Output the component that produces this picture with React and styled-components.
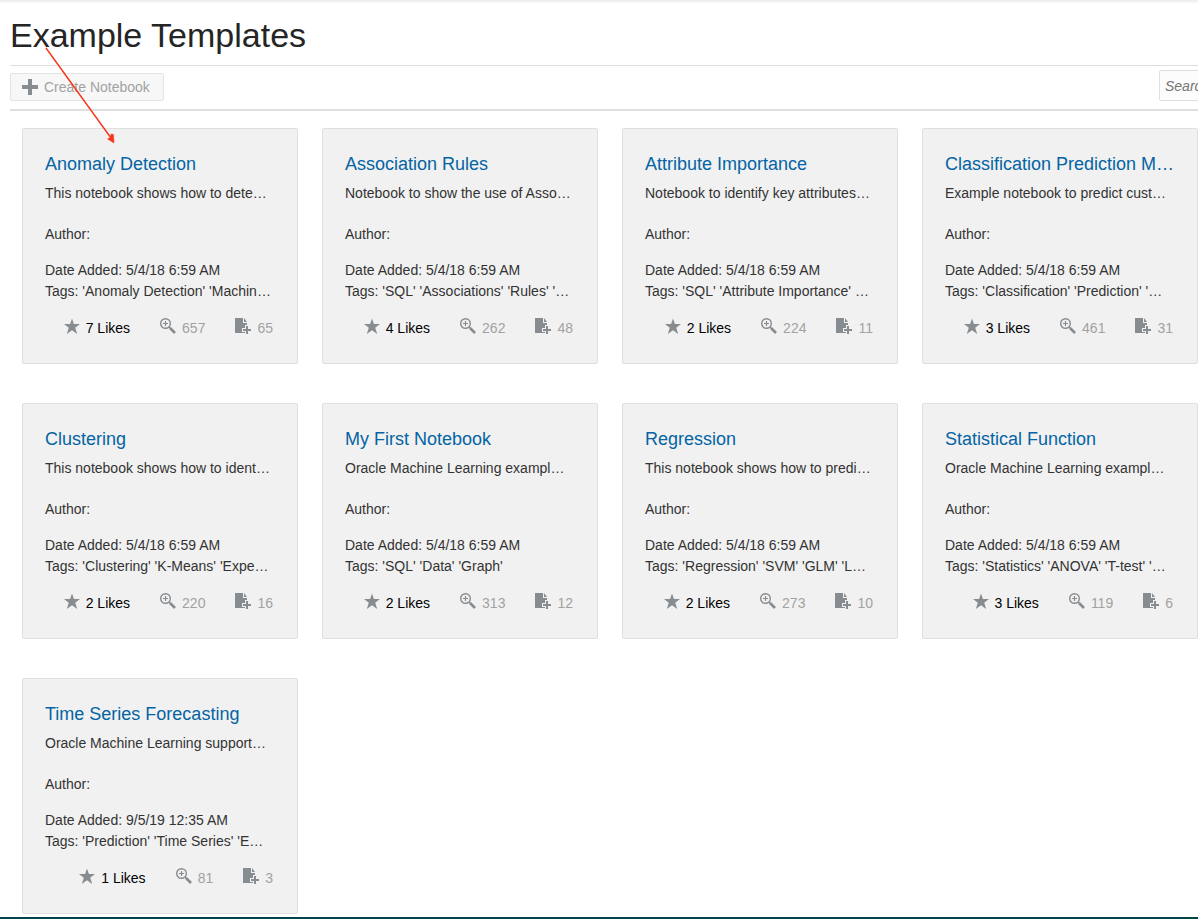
import React from "react";
import styled, { createGlobalStyle } from "styled-components";

const GlobalStyle = createGlobalStyle`
  *, *::before, *::after { box-sizing: border-box; }
  body {
    margin: 0;
    background: #fff;
    color: #333;
    font: 14px/20px "Liberation Sans", Arial, sans-serif;
    overflow-x: hidden;
  }
`;

const Page = styled.div`
  position: relative;
  overflow: hidden;
  border-bottom: 2px solid #004549;
  padding-bottom: 3px;
`;

const TopEdge = styled.div`
  height: 3px;
  background: linear-gradient(#ebebeb, #f9f9f9);
`;

const Header = styled.header`
  margin-left: 10px;
`;

const PageTitle = styled.h1`
  margin: 0;
  padding: 12px 0 10px;
  font-size: 34px;
  line-height: 40px;
  font-weight: 400;
  color: #252525;
`;

const Toolbar = styled.div`
  display: flex;
  align-items: flex-end;
  justify-content: space-between;
  height: 46px;
  padding-bottom: 8px;
  border-top: 1px solid #dfdfdf;
  border-bottom: 2px solid #dfdfdf;
`;

const CreateButton = styled.button`
  display: flex;
  align-items: center;
  gap: 6px;
  min-width: 154px;
  height: 28px;
  padding: 0 11px;
  border: 1px solid #e4e4e4;
  border-radius: 2px;
  background: #f7f7f7;
  color: #a2a2a2;
  font: inherit;
  white-space: nowrap;
`;

const SearchInput = styled.input`
  flex: none;
  width: 180px;
  height: 31px;
  margin-right: -141px;
  padding: 0 5px;
  border: 1px solid #dfdfdf;
  border-radius: 2px;
  background: #fcfcfc;
  font: inherit;
  &::placeholder {
    color: #757575;
    font-style: italic;
    opacity: 1;
  }
`;

const CardGrid = styled.main`
  display: grid;
  grid-template-columns: repeat(auto-fill, 276px);
  gap: 39px 24px;
  padding: 17px 0 0 22px;
`;

const Card = styled.article`
  height: 236px;
  padding: 23px 22px 0;
  border: 1px solid #dfdfdf;
  border-radius: 2px;
  background: #f1f1f1;
`;

const CardTitle = styled.h2`
  margin: 0;
  font-size: 18px;
  line-height: 24px;
  font-weight: 400;
  white-space: nowrap;
`;

const TitleLink = styled.a`
  color: #0464a4;
  text-decoration: none;
`;

const Line = styled.p`
  margin: ${(p) => p.$space || 0}px 0 0;
  line-height: 21px;
  white-space: nowrap;
`;

const Stats = styled.div`
  display: flex;
  justify-content: flex-end;
  gap: 30px;
  margin-top: 14px;
  padding-right: 2px;
`;

const Stat = styled.span`
  display: flex;
  gap: 6px;
  line-height: 24px;
  color: ${(p) => (p.$strong ? "#000" : "#a2a2a2")};
`;

const Icon = styled.svg`
  flex: none;
  display: block;
  width: 16px;
  height: 16px;
  margin-top: 2px;
  color: #878c90;
`;

const PlusIcon = styled(Icon)`
  margin-top: 0;
`;

const Arrow = styled.svg`
  position: absolute;
  left: 44px;
  top: 46px;
  width: 74px;
  height: 100px;
  pointer-events: none;
`;

const StarIcon = () => (
  <Icon viewBox="0 0 16 16" aria-hidden="true">
    <path fill="currentColor" d="M8 0.500l1.900 5.500H16l-4.800 3.700L13.200 16 8 12.200 2.800 16l2-6.300L0 6h6.100z" />
  </Icon>
);

const ViewsIcon = () => (
  <Icon viewBox="0 0 16 16" aria-hidden="true">
    <circle cx="5.500" cy="5.500" r="4.800" fill="none" stroke="currentColor" strokeWidth="1.400" />
    <path d="M5.500 3v5M3 5.500h5" stroke="currentColor" strokeWidth="1.200" />
    <path d="M9 9l1.500 1.500" stroke="currentColor" strokeWidth="1.300" />
    <path d="M10 10l5 5" stroke="currentColor" strokeWidth="2.600" />
  </Icon>
);

const CopiesIcon = () => (
  <Icon viewBox="0 0 16 16" aria-hidden="true">
    <path fill="currentColor" d="M0 0h8v5h4v10H0z" />
    <path fill="currentColor" d="M9 0l3 4H9z" />
    <path fill="#f1f1f1" d="M10 7h4v3h2v4h-2v2h-4v-2H7v-4h3z" />
    <path fill="currentColor" d="M11 8h2v3h3v2h-3v3h-2v-3H8v-2h3z" />
  </Icon>
);

const templates = [
  { title: "Anomaly Detection", text: "This notebook shows how to dete…", tags: "'Anomaly Detection' 'Machin…", likes: 7, views: 657, copies: 65 },
  { title: "Association Rules", text: "Notebook to show the use of Asso…", tags: "'SQL' 'Associations' 'Rules' '…", likes: 4, views: 262, copies: 48 },
  { title: "Attribute Importance", text: "Notebook to identify key attributes…", tags: "'SQL' 'Attribute Importance' …", likes: 2, views: 224, copies: 11 },
  { title: "Classification Prediction M…", text: "Example notebook to predict cust…", tags: "'Classification' 'Prediction' '…", likes: 3, views: 461, copies: 31 },
  { title: "Clustering", text: "This notebook shows how to ident…", tags: "'Clustering' 'K-Means' 'Expe…", likes: 2, views: 220, copies: 16 },
  { title: "My First Notebook", text: "Oracle Machine Learning exampl…", tags: "'SQL' 'Data' 'Graph'", likes: 2, views: 313, copies: 12 },
  { title: "Regression", text: "This notebook shows how to predi…", tags: "'Regression' 'SVM' 'GLM' 'L…", likes: 2, views: 273, copies: 10 },
  { title: "Statistical Function", text: "Oracle Machine Learning exampl…", tags: "'Statistics' 'ANOVA' 'T-test' '…", likes: 3, views: 119, copies: 6 },
  { title: "Time Series Forecasting", text: "Oracle Machine Learning support…", date: "9/5/19 12:35 AM", tags: "'Prediction' 'Time Series' 'E…", likes: 1, views: 81, copies: 3 },
];

const TemplateCard = ({ title, text, date = "5/4/18 6:59 AM", tags, likes, views, copies }) => (
  <Card>
    <CardTitle><TitleLink href="#">{title}</TitleLink></CardTitle>
    <Line $space={7}>{text}</Line>
    <Line $space={20}>Author:</Line>
    <Line $space={15}>Date Added: {date}</Line>
    <Line>Tags: {tags}</Line>
    <Stats>
      <Stat $strong><StarIcon />{likes} Likes</Stat>
      <Stat><ViewsIcon />{views}</Stat>
      <Stat><CopiesIcon />{copies}</Stat>
    </Stats>
  </Card>
);

export default function App() {
  return (
    <Page>
      <GlobalStyle />
      <TopEdge />
      <Header>
        <PageTitle>Example Templates</PageTitle>
        <Toolbar>
          <CreateButton type="button">
            <PlusIcon viewBox="0 0 16 16" aria-hidden="true">
              <path fill="currentColor" d="M6 0h4v6h6v4h-6v6H6v-6H0V6h6z" />
            </PlusIcon>
            Create Notebook
          </CreateButton>
          <SearchInput type="search" aria-label="Search" placeholder="Search" />
        </Toolbar>
      </Header>
      <CardGrid>
        {templates.map((t) => <TemplateCard key={t.title} {...t} />)}
      </CardGrid>
      <Arrow viewBox="0 0 74 100" aria-hidden="true">
        <path d="M2 2l65 90" stroke="#f7341a" strokeWidth="1.400" fill="none" />
        <path d="M70 97l-6.500-4 2.800-1.500.7-3.500 2.500.500z" fill="#f7341a" stroke="#f7341a" strokeWidth=".5" />
      </Arrow>
    </Page>
  );
}
